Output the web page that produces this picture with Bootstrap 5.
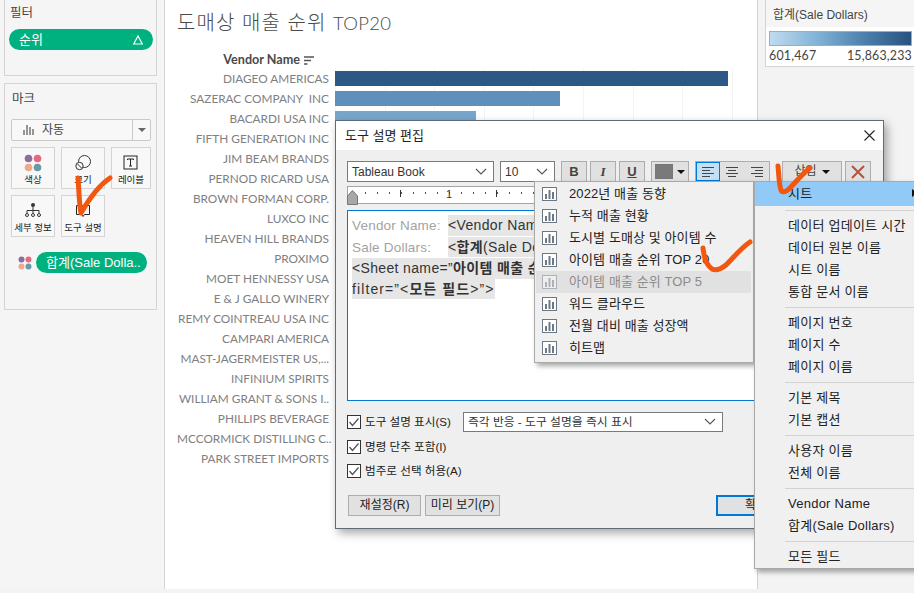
<!DOCTYPE html>
<html lang="ko">
<head>
<meta charset="utf-8">
<title>도매상 매출 순위 TOP20</title>
<link href="https://cdn.jsdelivr.net/npm/bootstrap@5.3.0/dist/css/bootstrap.min.css" rel="stylesheet">
<style>
html,body{height:593px;overflow:hidden}
body{width:914px;background:#f3f3f3;font-family:"Lato","Noto Sans CJK KR",sans-serif;color:#333;font-size:13px;line-height:1.2}
.kr{font-family:"Liberation Sans","Noto Sans CJK KR",sans-serif}
.shell{height:589px}
.side{width:165px;flex:none;background:#f5f5f5;border-right:1px solid #d4d4d4;padding:0 7px 0 4px}
.pane{border:1px solid #d4d4d4;background:#f5f5f5}
.pane-filter{height:77px;margin-top:-1px;padding:6px 4px 0 4px}
.pane-marks{height:227px;margin-top:7px;padding:8px 5px 0 6px}
.pane-title{font-size:12.5px;color:#444;height:22px;padding-left:1px}
.pill{background:#00b180;color:#fff;border-radius:11px;height:21px;font-size:13px;padding:0 10px}
.pill-filter{margin-top:1px;width:144px}
.delta{width:10px;height:10px}
.mark-select{height:22px;width:140px;border:1px solid #c9c9c9;background:#f8f8f8;margin-top:5px;border-radius:2px}
.mark-select .lab{flex:1;font-size:12px;padding-left:11px;gap:8px;color:#444}
.mark-select .drop{width:18px;height:100%;border-left:1px solid #c9c9c9}
.caret-d{width:0;height:0;border-left:4px solid transparent;border-right:4px solid transparent;border-top:4px solid #666}
.mark-grid{display:grid;grid-template-columns:44px 44px 40px;column-gap:6px;row-gap:6px;margin-top:6px;width:140px}
.mark-cell{height:42px;border:1px solid #d4d4d4;background:#f8f8f8;font-size:9.5px;padding-top:6px;color:#222;gap:2px}
.mark-cell svg{height:18px;width:18px}
.mark-row{margin-top:15px;gap:4px;padding-left:7px}
.pill-sum{width:111px;padding:0 0 0 10px;font-size:13px;white-space:nowrap;overflow:hidden}
.centre{width:593px;flex:none;background:#fff;border-right:1px solid #d4d4d4;padding:11px 0 0 12px}
.big-title{font-size:20px;letter-spacing:1.05px;color:#4a4a4a;font-weight:300;height:26px;margin:0}
.title-latin{font-family:"Lato",sans-serif;font-size:18.5px;font-weight:300;letter-spacing:.3px}
.axis-head{height:18px;padding-top:2px;margin-top:13px;width:137px;justify-content:flex-end;gap:4px;font-weight:700;font-size:12.6px;color:#4a4a4a}
.vrow{height:20px}
.vname{width:152px;flex:none;text-align:right;color:#808080;font-size:11.8px;white-space:pre;padding-top:2px}
.vtrack{flex:1;height:20px;margin-left:6px;position:relative;background:repeating-linear-gradient(90deg,#f4f4f4 0 1px,transparent 1px 49.6px)}
.vbar{height:15px;position:absolute;top:3px;left:0}
.right-col{flex:1;padding:0 0 0 7px;overflow:hidden}
.legend{background:#f5f5f5;border:1px solid #d4d4d4;border-right:0;height:68px;margin-top:-1px}
.legend-title{height:27px;padding:8px 0 0 7px;font-size:12px;color:#444}
.legend-body{background:#fff;height:39px;padding:4px 2px 0 3px}
.ramp{height:15px;border:1px solid #aaa;background:linear-gradient(90deg,#bfdcf0,#7fb0d4 35%,#4f82ae 65%,#28527f)}
.ramp-lab{font-size:12.4px;color:#444;margin-top:3px;letter-spacing:.2px}
.dlg{position:absolute;left:335px;top:120px;width:549px;height:409px;background:#efefef;border:1px solid #5f6b76;box-shadow:3px 4px 9px rgba(0,0,0,.35)}
.dlg-head{height:29px;background:#fff;padding:0 8px 0 9px;font-size:13px;color:#222}
.dlg-body{padding:11px 12px 0 11px}
.tool-row{height:21px;gap:6px}
.combo{height:21px;background:#fff;border:1px solid #7a7a7a;padding:1px 6px 0 4px;font-size:12px;color:#333}
.combo svg{margin-top:-1px}
.combo-font{width:147px}
.combo-size{width:55px}
.tbtn{height:21px;width:26px;background:#e1e1e1;border:1px solid #adadad;font-weight:700;font-size:13px;color:#444}
.tb-gap{gap:3px}
.tbtn-i{font-family:"Liberation Serif",serif;font-style:italic}
.tbtn-u{text-decoration:underline}
.tbtn-col{width:38px;padding:0 3px;gap:4px;margin-left:0}
.swatch{width:22px;height:15px;background:#7a7a7a;border:1px solid #777}
.caret-k{width:0;height:0;border-left:4px solid transparent;border-right:4px solid transparent;border-top:4px solid #111}
.align-grp{width:75px;height:21px;background:#e1e1e1;border:1px solid #adadad}
.align-btn{width:25px;height:100%}
.align-on{background:#c5e0f5;outline:1px solid #0078d7;outline-offset:-1px}
.btn-ins{width:60px;gap:5px;margin-left:6px;font-weight:400;font-size:12px}
.btn-del{margin-left:-3px}
.ruler{height:18px;margin-top:4px;background:#fff;border:1px solid #a5a5a5;width:523px;position:relative}
.ruler-one{position:absolute;left:98px;top:1px;font-size:11px;color:#333}
.ruler-handle{position:absolute;left:-1px;top:3px}
.ruler-ticks{position:absolute;left:0;right:0;top:5px;height:6px;background:repeating-linear-gradient(90deg,#555 0 1px,transparent 1px 12px) 5px 0/100% 2px no-repeat}
.ruler-maj{position:absolute;top:3px;width:1px;height:7px;background:#333}
.maj-a{left:52px}
.maj-b{left:148px}
.editor{height:191px;margin-top:6px;width:523px;background:#fff;border:1px solid #0078d7;padding:4px 4px;font-size:14px;line-height:20.5px;color:#333;white-space:nowrap}
.muted-t{color:#a3a3a3;font-size:13.5px;letter-spacing:.2px;display:inline-block;width:96px}
.tok{background:#e6e6e6;color:#333;display:inline-block;letter-spacing:.35px}
.tok-wide{letter-spacing:1.1px}
.tok b{font-weight:700}
.check-row{height:20px;gap:4px;font-size:11.6px;color:#222}
.cbx{width:14px;height:14px;flex:none}
.combo-tip{width:260px;height:20px;margin-left:8px;font-size:11.8px;border-color:#7a7a7a;padding:0 6px 0 4px;background:#fff}
.chk-wrap{margin-top:11px}
.chk-2{margin-top:4.5px}
.dlg-foot{margin-top:14px;padding-left:1px}
.dbtn{height:21px;background:#e1e1e1;border:1px solid #adadad;font-size:12px;color:#222;padding:0}
.dbtn-a{width:73px}
.dbtn-b{width:75px;margin-left:4px}
.dbtn-ok{width:80px;border:2px solid #0078d7;margin-left:216px}
.fly{position:absolute;background:#f0f0f0;border:1px solid #a9a9a9;box-shadow:3px 3px 5px rgba(0,0,0,.35);font-size:13px;letter-spacing:.25px;color:#222}
.fly-sheets{left:534px;top:181px;width:220px;height:182px;padding:1px 1px}
.sheet-it{height:22px;padding-left:6px;gap:12px;white-space:nowrap;letter-spacing:.1px}
.sheet-dis{background:#e1e1e1;color:#8c8c8c;margin-right:1px}
.sheet-dis svg{opacity:.45}
.ic-chart{width:15px;height:14px;flex:none}
.fly-main{left:754px;top:181px;width:175px;height:388px}
.main-it{height:22px;padding-left:33px;white-space:nowrap}
.main-hot{background:#91c9f7;height:24px;position:relative}
.hot-arrow{position:absolute;left:157px;top:7px;width:0;height:0;border-top:4px solid transparent;border-bottom:4px solid transparent;border-left:5px solid #111}
.sep{height:1px;background:#d2d2d2;margin:4px 0 4px 30px}
.stroke-layer{position:absolute;left:0;top:0;width:914px;height:593px;pointer-events:none}
</style>
</head>
<body class="position-relative">
<svg width="0" height="0" class="position-absolute">
  <symbol id="chart" viewBox="0 0 15 14"><rect x=".5" y=".5" width="14" height="13" fill="#fff" stroke="#6d7885"/><rect x="3" y="7" width="2" height="5" fill="#6d7885"/><rect x="6.5" y="3" width="2" height="9" fill="#6d7885"/><rect x="10" y="5" width="2" height="7" fill="#6d7885"/></symbol>
  <symbol id="dots" viewBox="0 0 16 16"><circle cx="4" cy="4" r="3.4" fill="#8a6f9e"/><circle cx="12" cy="4" r="3.4" fill="#e8697d"/><circle cx="4" cy="12" r="3.4" fill="#f0a988"/><circle cx="12" cy="12" r="3.4" fill="#6b9aa6"/></symbol>
  <symbol id="chev" viewBox="0 0 12 7"><path d="M1 1l5 5 5-5" fill="none" stroke="#555" stroke-width="1.1"/></symbol>
  <symbol id="tick" viewBox="0 0 14 14"><rect x=".5" y=".5" width="13" height="13" fill="#fff" stroke="#333"/><path d="M2.5 7l3 3.5 6-7" fill="none" stroke="#555" stroke-width="1.3"/></symbol>
  <symbol id="al-l" viewBox="0 0 12 10"><path d="M0 .5h12M0 3.5h8M0 6.5h12M0 9.5h8" stroke="#444"/></symbol>
  <symbol id="al-c" viewBox="0 0 12 10"><path d="M0 .5h12M2 3.5h8M0 6.5h12M2 9.5h8" stroke="#444"/></symbol>
  <symbol id="al-r" viewBox="0 0 12 10"><path d="M0 .5h12M4 3.5h8M0 6.5h12M4 9.5h8" stroke="#444"/></symbol>
</svg>

<div class="shell d-flex">
  <aside class="side">
    <section class="pane pane-filter">
      <div class="pane-title kr">필터</div>
      <div class="pill pill-filter d-flex align-items-center justify-content-between kr">순위
        <svg class="delta" viewBox="0 0 10 10"><path d="M5 1L9.3 9H.7z" fill="none" stroke="#fff" stroke-width="1.2"/></svg>
      </div>
    </section>
    <section class="pane pane-marks">
      <div class="pane-title kr">마크</div>
      <div class="mark-select d-flex align-items-center">
        <div class="lab d-flex align-items-center kr">
          <svg width="11" height="11" viewBox="0 0 11 11"><path d="M1 11V6M4 11V1M7 11V3M10 11V5" stroke="#333"/></svg>자동
        </div>
        <div class="drop d-flex align-items-center justify-content-center"><span class="caret-d"></span></div>
      </div>
      <div class="mark-grid kr">
        <div class="mark-cell d-flex flex-column align-items-center"><svg><use href="#dots"/></svg>색상</div>
        <div class="mark-cell d-flex flex-column align-items-center"><svg viewBox="0 0 18 18"><circle cx="10.5" cy="7.5" r="6" fill="none" stroke="#333"/><circle cx="5.5" cy="12" r="3.7" fill="#f8f8f8" stroke="#333"/><path d="M3.5 10l4 4" stroke="#333"/></svg>크기</div>
        <div class="mark-cell d-flex flex-column align-items-center"><svg viewBox="0 0 18 18"><rect x="2" y="2" width="13" height="13" fill="none" stroke="#222"/><path d="M5.5 6V5h6v1M8.5 5v7M7 12h3" fill="none" stroke="#222"/></svg>레이블</div>
        <div class="mark-cell d-flex flex-column align-items-center"><svg viewBox="0 0 18 18"><circle cx="9" cy="3" r="2" fill="#333"/><path d="M9 5v3M3 11V8.500h12V11M9 8v3" fill="none" stroke="#333"/><circle cx="3" cy="13" r="1.500" fill="none" stroke="#333"/><circle cx="9" cy="13" r="1.500" fill="none" stroke="#333"/><circle cx="15" cy="13" r="1.500" fill="none" stroke="#333"/></svg>세부 정보</div>
        <div class="mark-cell d-flex flex-column align-items-center"><svg viewBox="0 0 18 18"><path d="M2.500 3.500h13v9h-5l-1.500 2-1.500-2h-5z" fill="none" stroke="#222"/></svg>도구 설명</div>
      </div>
      <div class="mark-row d-flex align-items-center">
        <svg width="14" height="14"><use href="#dots"/></svg>
        <div class="pill pill-sum d-flex align-items-center kr">합계(Sale Dolla..</div>
      </div>
    </section>
  </aside>

  <main class="centre">
    <h1 class="big-title kr">도매상 매출 순위 <span class="title-latin">TOP20</span></h1>
    <div class="axis-head d-flex align-items-center">Vendor Name
      <svg width="10" height="9" viewBox="0 0 10 9"><path d="M0 1h10M0 4.500h7M0 8h3.500" stroke="#555" stroke-width="1.500"/></svg>
    </div>
    <div class="vrow d-flex align-items-center"><div class="vname">DIAGEO AMERICAS</div><div class="vtrack"><div class="vbar" style="width:393px;background:#2b5885"></div></div></div>
    <div class="vrow d-flex align-items-center"><div class="vname">SAZERAC COMPANY  INC</div><div class="vtrack"><div class="vbar" style="width:225px;background:#5f90bb"></div></div></div>
    <div class="vrow d-flex align-items-center"><div class="vname">BACARDI USA INC</div><div class="vtrack"><div class="vbar" style="width:141px;background:#78a6cb"></div></div></div>
    <div class="vrow d-flex align-items-center"><div class="vname">FIFTH GENERATION INC</div></div>
    <div class="vrow d-flex align-items-center"><div class="vname">JIM BEAM BRANDS</div></div>
    <div class="vrow d-flex align-items-center"><div class="vname">PERNOD RICARD USA</div></div>
    <div class="vrow d-flex align-items-center"><div class="vname">BROWN FORMAN CORP.</div></div>
    <div class="vrow d-flex align-items-center"><div class="vname">LUXCO INC</div></div>
    <div class="vrow d-flex align-items-center"><div class="vname">HEAVEN HILL BRANDS</div></div>
    <div class="vrow d-flex align-items-center"><div class="vname">PROXIMO</div></div>
    <div class="vrow d-flex align-items-center"><div class="vname">MOET HENNESSY USA</div></div>
    <div class="vrow d-flex align-items-center"><div class="vname">E &amp; J GALLO WINERY</div></div>
    <div class="vrow d-flex align-items-center"><div class="vname">REMY COINTREAU USA INC</div></div>
    <div class="vrow d-flex align-items-center"><div class="vname">CAMPARI AMERICA</div></div>
    <div class="vrow d-flex align-items-center"><div class="vname">MAST-JAGERMEISTER US,...</div></div>
    <div class="vrow d-flex align-items-center"><div class="vname">INFINIUM SPIRITS</div></div>
    <div class="vrow d-flex align-items-center"><div class="vname">WILLIAM GRANT &amp; SONS I..</div></div>
    <div class="vrow d-flex align-items-center"><div class="vname">PHILLIPS BEVERAGE</div></div>
    <div class="vrow d-flex align-items-center"><div class="vname">MCCORMICK DISTILLING C..</div></div>
    <div class="vrow d-flex align-items-center"><div class="vname">PARK STREET IMPORTS</div></div>
  </main>

  <aside class="right-col">
    <section class="legend">
      <div class="legend-title kr">합계(Sale Dollars)</div>
      <div class="legend-body">
        <div class="ramp"></div>
        <div class="ramp-lab d-flex justify-content-between"><span>601,467</span><span>15,863,233</span></div>
      </div>
    </section>
  </aside>
</div>

<div class="dlg kr">
  <div class="dlg-head d-flex align-items-center justify-content-between">도구 설명 편집
    <svg width="11" height="11" viewBox="0 0 11 11"><path d="M.5.5l10 10M10.500.5l-10 10" stroke="#222" stroke-width="1.100"/></svg>
  </div>
  <div class="dlg-body">
    <div class="tool-row d-flex align-items-center">
      <div class="combo combo-font d-flex align-items-center justify-content-between">Tableau Book<svg width="12" height="7"><use href="#chev"/></svg></div>
      <div class="combo combo-size d-flex align-items-center justify-content-between">10<svg width="12" height="7"><use href="#chev"/></svg></div>
      <div class="d-flex tb-gap">
        <div class="tbtn d-flex align-items-center justify-content-center">B</div>
        <div class="tbtn tbtn-i d-flex align-items-center justify-content-center">I</div>
        <div class="tbtn tbtn-u d-flex align-items-center justify-content-center">U</div>
      </div>
      <div class="tbtn tbtn-col d-flex align-items-center"><span class="swatch"></span><span class="caret-k"></span></div>
      <div class="align-grp d-flex">
        <div class="align-btn align-on d-flex align-items-center justify-content-center"><svg width="12" height="10"><use href="#al-l"/></svg></div>
        <div class="align-btn d-flex align-items-center justify-content-center"><svg width="12" height="10"><use href="#al-c"/></svg></div>
        <div class="align-btn d-flex align-items-center justify-content-center"><svg width="12" height="10"><use href="#al-r"/></svg></div>
      </div>
      <div class="tbtn btn-ins d-flex align-items-center justify-content-center">삽입<span class="caret-k"></span></div>
      <div class="tbtn btn-del d-flex align-items-center justify-content-center"><svg width="14" height="14" viewBox="0 0 14 14"><path d="M1 1l12 12M13 1L1 13" stroke="#b5533c" stroke-width="2"/></svg></div>
    </div>
    <div class="ruler">
      <span class="ruler-ticks"></span>
      <span class="ruler-maj maj-a"></span>
      <span class="ruler-maj maj-b"></span>
      <span class="ruler-one">1</span>
      <svg class="ruler-handle" width="11" height="15" viewBox="0 0 11 15"><path d="M5.500 .5L10.500 6v8.500H.5V6z" fill="#a8a8a8" stroke="#777"/></svg>
    </div>
    <div class="editor">
      <div><span class="muted-t">Vendor Name:</span><span class="tok">&lt;Vendor Name&gt;</span></div>
      <div><span class="muted-t">Sale Dollars:</span><span class="tok">&lt;<b>합계</b>(Sale Dollars)&gt;</span></div>
      <div><span class="tok">&lt;Sheet name=”<b>아이템 매출 순위 TOP 5</b>”</span></div>
      <div><span class="tok tok-wide">filter=”&lt;<b>모든 필드</b>&gt;”&gt;</span></div>
    </div>
    <div class="chk-wrap">
      <div class="check-row d-flex align-items-center"><svg class="cbx"><use href="#tick"/></svg>도구 설명 표시(S)
        <div class="combo combo-tip d-flex align-items-center justify-content-between">즉각 반응 - 도구 설명을 즉시 표시<svg width="12" height="7"><use href="#chev"/></svg></div>
      </div>
      <div class="check-row chk-2 d-flex align-items-center"><svg class="cbx"><use href="#tick"/></svg>명령 단추 포함(I)</div>
      <div class="check-row chk-2 d-flex align-items-center"><svg class="cbx"><use href="#tick"/></svg>범주로 선택 허용(A)</div>
    </div>
    <div class="dlg-foot d-flex">
      <button class="dbtn dbtn-a" type="button">재설정(R)</button>
      <button class="dbtn dbtn-b" type="button">미리 보기(P)</button>
      <button class="dbtn dbtn-ok" type="button">확인</button>
    </div>
  </div>
</div>

<div class="fly fly-sheets kr">
  <div class="sheet-it d-flex align-items-center"><svg class="ic-chart"><use href="#chart"/></svg>2022년 매출 동향</div>
  <div class="sheet-it d-flex align-items-center"><svg class="ic-chart"><use href="#chart"/></svg>누적 매출 현황</div>
  <div class="sheet-it d-flex align-items-center"><svg class="ic-chart"><use href="#chart"/></svg>도시별 도매상 및 아이템 수</div>
  <div class="sheet-it d-flex align-items-center"><svg class="ic-chart"><use href="#chart"/></svg>아이템 매출 순위 TOP 20</div>
  <div class="sheet-it sheet-dis d-flex align-items-center"><svg class="ic-chart"><use href="#chart"/></svg>아이템 매출 순위 TOP 5</div>
  <div class="sheet-it d-flex align-items-center"><svg class="ic-chart"><use href="#chart"/></svg>워드 클라우드</div>
  <div class="sheet-it d-flex align-items-center"><svg class="ic-chart"><use href="#chart"/></svg>전월 대비 매출 성장액</div>
  <div class="sheet-it d-flex align-items-center"><svg class="ic-chart"><use href="#chart"/></svg>히트맵</div>
</div>

<div class="fly fly-main kr">
  <div class="main-it main-hot d-flex align-items-center">시트<span class="hot-arrow"></span></div>
  <div class="sep"></div>
  <div class="main-it d-flex align-items-center">데이터 업데이트 시간</div>
  <div class="main-it d-flex align-items-center">데이터 원본 이름</div>
  <div class="main-it d-flex align-items-center">시트 이름</div>
  <div class="main-it d-flex align-items-center">통합 문서 이름</div>
  <div class="sep"></div>
  <div class="main-it d-flex align-items-center">페이지 번호</div>
  <div class="main-it d-flex align-items-center">페이지 수</div>
  <div class="main-it d-flex align-items-center">페이지 이름</div>
  <div class="sep"></div>
  <div class="main-it d-flex align-items-center">기본 제목</div>
  <div class="main-it d-flex align-items-center">기본 캡션</div>
  <div class="sep"></div>
  <div class="main-it d-flex align-items-center">사용자 이름</div>
  <div class="main-it d-flex align-items-center">전체 이름</div>
  <div class="sep"></div>
  <div class="main-it d-flex align-items-center">Vendor Name</div>
  <div class="main-it d-flex align-items-center">합계(Sale Dollars)</div>
  <div class="sep"></div>
  <div class="main-it d-flex align-items-center">모든 필드</div>
</div>

<svg class="stroke-layer" viewBox="0 0 914 593" fill="none" stroke="#f2570f" stroke-width="5" stroke-linecap="round" stroke-linejoin="round">
  <path d="M78 178c1 12 1 24 3 35c8-14 17-27 29-35"/>
  <path d="M778 166c1 10 1 19 3 24c1 3 5 2 8-1c7-7 13-15 21-21"/>
  <path d="M703 248c1 9 3 17 9 21c4 2 9 0 14-4c8-8 15-17 24-23"/>
</svg>
<script src="https://cdn.jsdelivr.net/npm/bootstrap@5.3.0/dist/js/bootstrap.bundle.min.js"></script>
</body>
</html>
